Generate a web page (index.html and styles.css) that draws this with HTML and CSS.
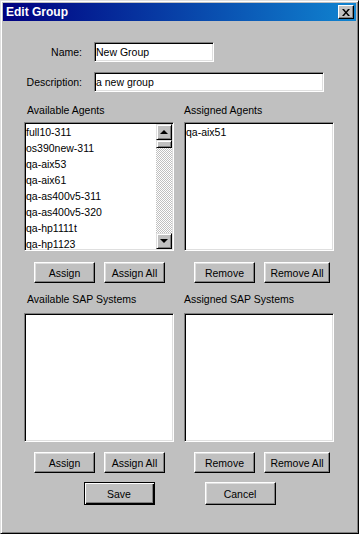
FILE: index.html
```html
<!DOCTYPE html>
<html lang="en">
<head>
  <meta charset="utf-8">
  <title>Edit Group</title>
  <link rel="stylesheet" href="styles.css">
</head>
<body>
  <div class="window">
    <div class="titlebar">
      <span class="title">Edit Group</span>
      <button class="close" title="Close">
        <svg width="8" height="7" viewBox="0 0 8 7"><path d="M0 0h2l2 2.5 2-2.5h2l-3 3.5 3 3.5h-2l-2-2.5-2 2.5h-2l3-3.5z" fill="#000"/></svg>
      </button>
    </div>

    <div class="fields">
      <label class="field-label" for="name">Name:</label>
      <input class="textbox name-box" id="name" value="New Group">
      <label class="field-label" for="desc">Description:</label>
      <input class="textbox desc-box" id="desc" value="a new group">
    </div>

    <div class="lists">
      <div class="group group-left">
        <div class="group-label">Available Agents</div>
        <div class="listbox">
          <ul class="items">
            <li>full10-311</li>
            <li>os390new-311</li>
            <li>qa-aix53</li>
            <li>qa-aix61</li>
            <li>qa-as400v5-311</li>
            <li>qa-as400v5-320</li>
            <li>qa-hp1111t</li>
            <li>qa-hp1123</li>
          </ul>
          <div class="scrollbar">
            <div class="sb-btn"><span class="arrow-up"></span></div>
            <div class="sb-thumb"></div>
            <div class="sb-track"></div>
            <div class="sb-btn"><span class="arrow-down"></span></div>
          </div>
        </div>
        <div class="btn-row">
          <button class="btn">Assign</button>
          <button class="btn">Assign All</button>
        </div>
      </div>

      <div class="group">
        <div class="group-label">Assigned Agents</div>
        <div class="listbox">
          <ul class="items">
            <li>qa-aix51</li>
          </ul>
        </div>
        <div class="btn-row">
          <button class="btn">Remove</button>
          <button class="btn btn-wide">Remove All</button>
        </div>
      </div>

      <div class="group group-left group-sap">
        <div class="group-label">Available SAP Systems</div>
        <div class="listbox">
          <ul class="items"></ul>
        </div>
        <div class="btn-row">
          <button class="btn">Assign</button>
          <button class="btn">Assign All</button>
        </div>
      </div>

      <div class="group group-sap">
        <div class="group-label">Assigned SAP Systems</div>
        <div class="listbox">
          <ul class="items"></ul>
        </div>
        <div class="btn-row">
          <button class="btn">Remove</button>
          <button class="btn btn-wide">Remove All</button>
        </div>
      </div>
    </div>

    <div class="dialog-buttons">
      <button class="btn btn-dialog btn-default">Save</button>
      <button class="btn btn-dialog">Cancel</button>
    </div>
  </div>
</body>
</html>
```

FILE: styles.css
```css
body {
  margin: 0;
  background: #c0c0c0;
  font-family: "Liberation Sans", Arial, sans-serif;
  font-size: 10.5px;
  color: #000;
}

.window {
  width: 359px;
  height: 534px;
  box-sizing: border-box;
  padding: 1px;
  background: #c0c0c0;
  border: 1px solid;
  border-color: #dfdfdf #000 #000 #dfdfdf;
  box-shadow: inset 1px 1px #fff, inset -1px -1px #808080;
}

.titlebar {
  height: 18px;
  margin: 1px;
  display: flex;
  align-items: center;
  justify-content: space-between;
  padding: 0 2px 0 3px;
  background: linear-gradient(to right, #000080, #1084d0);
}

.title {
  color: #fff;
  font-weight: bold;
  font-size: 12px;
}

.close {
  width: 16px;
  height: 14px;
  padding: 0;
  display: flex;
  align-items: center;
  justify-content: center;
  background: #c0c0c0;
  border: 1px solid;
  border-color: #fff #000 #000 #fff;
  box-shadow: inset -1px -1px #808080;
}

.fields {
  display: grid;
  grid-template-columns: 80px auto;
  column-gap: 12px;
  row-gap: 10px;
  margin-top: 21px;
  align-items: center;
}

.field-label {
  text-align: right;
}

.textbox {
  height: 20px;
  box-sizing: border-box;
  margin: 0;
  padding: 0 1px;
  font: inherit;
  background: #fff;
  border: 1px solid;
  border-color: #808080 #fff #fff #808080;
  box-shadow: inset 1px 1px #000, inset -1px -1px #dfdfdf;
  outline: none;
}

.name-box {
  width: 120px;
}

.desc-box {
  width: 230px;
}

.lists {
  display: grid;
  grid-template-columns: 150px 150px;
  column-gap: 10px;
  margin-left: 22px;
  margin-top: 12px;
}

.group-label {
  height: 13px;
  line-height: 13px;
  margin-bottom: 5px;
}

.group-left .group-label {
  padding-left: 3px;
}

.group-sap .group-label {
  margin-top: 10px;
  margin-bottom: 7px;
}

.listbox {
  height: 129px;
  box-sizing: border-box;
  display: flex;
  background: #fff;
  border: 1px solid;
  border-color: #808080 #fff #fff #808080;
  box-shadow: inset 1px 1px #000, inset -1px -1px #dfdfdf;
  padding: 1px;
}

.items {
  flex: 1;
  list-style: none;
  margin: 0;
  padding: 0;
}

.items li {
  height: 16px;
  line-height: 16px;
  white-space: nowrap;
}

.scrollbar {
  width: 16px;
  display: flex;
  flex-direction: column;
}

.sb-btn,
.sb-thumb {
  box-sizing: border-box;
  background: #c0c0c0;
  border: 1px solid;
  border-color: #dfdfdf #000 #000 #dfdfdf;
  box-shadow: inset 1px 1px #fff, inset -1px -1px #808080;
}

.sb-btn {
  height: 16px;
  display: flex;
  align-items: center;
  justify-content: center;
}

.sb-thumb {
  height: 8px;
}

.sb-track {
  flex: 1;
  background: conic-gradient(#fff 25%, #c0c0c0 0 50%, #fff 0 75%, #c0c0c0 0);
  background-size: 2px 2px;
}

.arrow-up,
.arrow-down {
  width: 0;
  height: 0;
  border-left: 4px solid transparent;
  border-right: 4px solid transparent;
}

.arrow-up {
  border-bottom: 4px solid #000;
}

.arrow-down {
  border-top: 4px solid #000;
}

.btn-row {
  display: flex;
  gap: 9px;
  padding-left: 10px;
  margin-top: 11px;
}

.group-sap .btn-row {
  margin-top: 10px;
}

.btn {
  width: 61px;
  height: 21px;
  box-sizing: border-box;
  padding: 0;
  font: inherit;
  color: #000;
  background: #c0c0c0;
  border: 1px solid;
  border-color: #fff #000 #000 #fff;
  box-shadow: inset -1px -1px #808080, inset 1px 1px #dfdfdf;
}

.btn-wide {
  width: 66px;
}

.dialog-buttons {
  display: flex;
  justify-content: center;
  gap: 50px;
  margin-top: 9px;
}

.btn-dialog {
  width: 71px;
  height: 23px;
}

.btn-default {
  border: 1px solid #000;
  box-shadow: inset 1px 1px #fff, inset -1px -1px #000, inset -2px -2px #808080;
}
```
